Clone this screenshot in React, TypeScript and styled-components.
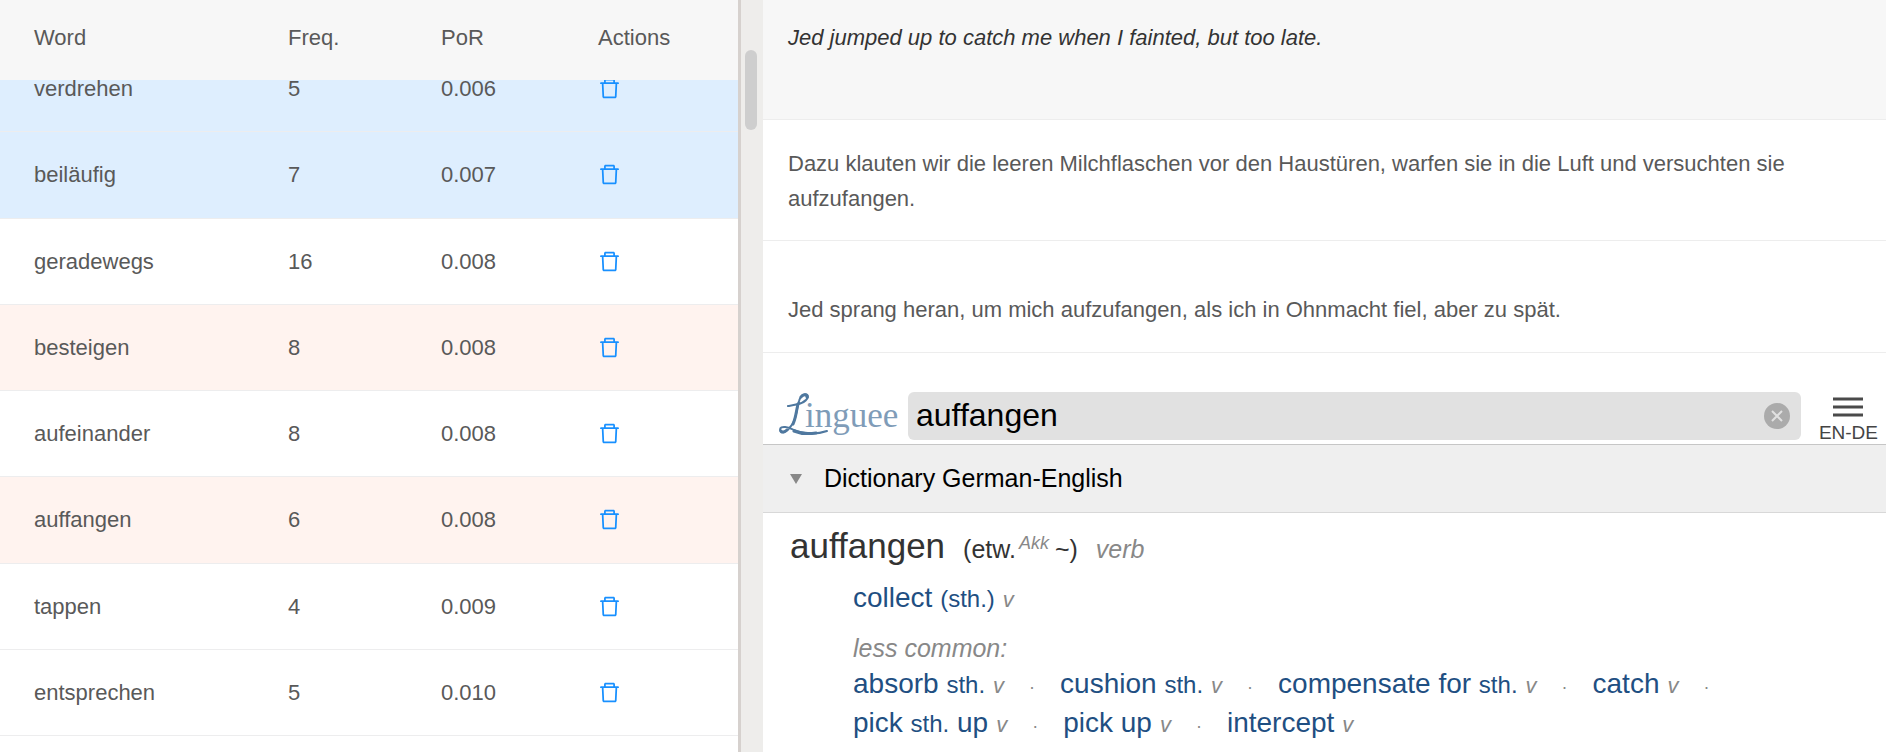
import { useLayoutEffect, useRef, useState } from "react";
import styled, { createGlobalStyle } from "styled-components";
import { AiOutlineDelete } from "react-icons/ai";

const Global = createGlobalStyle`
  * { box-sizing: border-box; }
  body {
    margin: 0;
    background: #fff;
    color: #595959;
    font: 22px/35px "Liberation Sans", Arial, sans-serif;
  }
`;

const Page = styled.div`
  display: grid;
  grid-template-columns: minmax(0, 738fr) 25px minmax(0, 1123fr);
  height: 100vh;
  overflow: hidden;
`;

const WordPane = styled.section`
  overflow: auto;
  scrollbar-width: none;
  padding-bottom: 40px;
`;

const WordTable = styled.table`
  width: 100%;
  height: 770px;
  table-layout: fixed;
  border-spacing: 0;
`;

const Col = styled.col<{ $w?: number }>`
  width: ${({ $w }) => ($w ? `${$w}px` : "auto")};
`;

const HeadCell = styled.th`
  position: sticky;
  top: 0;
  z-index: 1;
  height: 80px;
  padding: 20px 0 25px 34px;
  background: #f7f7f7;
  font-weight: 400;
  text-align: left;
`;

type Tone = "known" | "hard" | "plain";
const toneColor: Record<Tone, string> = { known: "#deeefe", hard: "#fff3ef", plain: "#fff" };

const Row = styled.tr<{ $tone: Tone }>`
  background: ${({ $tone }) => toneColor[$tone]};
`;

const Cell = styled.td`
  padding: 25px 0 25px 34px;
  border-bottom: 1px solid #ededee;
`;

const DeleteButton = styled.button`
  display: flex;
  padding: 0;
  margin-left: -1px;
  border: 0;
  background: none;
  color: #1890ff;
  cursor: pointer;
`;

const Gutter = styled.div`
  padding: 50px 5px 0 4px;
  border-left: 3px solid #d6d1ce;
  background: #eeedeb;
`;

const Thumb = styled.div`
  width: 12px;
  height: 80px;
  border-radius: 6px;
  background: #cecece;
`;

const ReadPane = styled.main`
  overflow: hidden;
`;

const Sentence = styled.p<{ $space?: "head" | "tall" }>`
  margin: 0;
  padding: ${({ $space }) =>
    $space === "head" ? "20px 25px 64px" : $space === "tall" ? "51px 25px 25px" : "26px 25px 24px"};
  border-bottom: 1px solid #ededed;
  background: ${({ $space }) => ($space === "head" ? "#f7f7f7" : "#fff")};
  color: ${({ $space }) => ($space === "head" ? "#333" : "inherit")};
  font-style: ${({ $space }) => ($space === "head" ? "italic" : "normal")};
`;

const SearchBar = styled.form`
  display: flex;
  align-items: flex-end;
  margin-top: 39px;
  padding: 0 8px 4px 16px;
  border-bottom: 1px solid #c6c6c6;
`;

const Logo = styled.a`
  width: 129px;
  height: 48px;
`;

const SearchField = styled.div`
  display: flex;
  flex: 1;
  align-items: center;
  height: 48px;
  padding: 0 11px 0 8px;
  border-radius: 6px;
  background: #e1e1e1;
`;

const SearchInput = styled.input`
  flex: 1;
  min-width: 0;
  padding: 0 0 2px;
  border: 0;
  outline: 0;
  background: none;
  color: #000;
  font: 32px/40px "Liberation Sans", Arial, sans-serif;
`;

const PlainButton = styled.button`
  display: flex;
  flex-direction: column;
  align-items: center;
  padding: 0;
  border: 0;
  background: none;
  color: #444;
  font: 19px/20px "Liberation Sans", Arial, sans-serif;
  cursor: pointer;
`;

const MenuButton = styled(PlainButton)`
  gap: 6px;
  margin: 0 0 -3px 18px;
`;

const DictHeader = styled.h2`
  display: flex;
  align-items: center;
  gap: 22px;
  height: 68px;
  margin: 0;
  padding: 0 27px;
  border-bottom: 1px solid #d8d8d8;
  background: #efefef;
  color: #000;
  font-size: 25px;
  font-weight: 400;
`;

const Entry = styled.article`
  padding: 13px 27px;
  color: #333;
`;

const Lemma = styled.h3`
  display: flex;
  align-items: baseline;
  height: 40px;
  margin: 0;
  font-size: 35px;
  font-weight: 400;
  line-height: 40px;
`;

const Note = styled.span`
  margin-left: 18px;
  font-size: 25px;
  line-height: 30px;
`;

const Case = styled.sup`
  margin: 0 6px 0 3px;
  color: #888;
  font-size: 18px;
  font-style: italic;
  line-height: 1;
`;

const Grey = styled.em`
  margin-left: 18px;
  color: #888;
  font-size: 25px;
  line-height: 30px;
`;

const Meanings = styled.div`
  padding-left: 63px;
`;

const Meaning = styled.p`
  margin: 0;
  font-size: 28px;
  line-height: 39px;
`;

const Lead = styled(Meaning)`
  margin-top: 12px;
`;

const Label = styled.p`
  margin: 15px 0 0;
  color: #888;
  font-size: 25px;
  font-style: italic;
  line-height: 32px;
`;

const Term = styled.a`
  color: #1f4f82;
  text-decoration: none;
`;

const Small = styled.span`
  font-size: 24px;
  line-height: 1;
`;

const Kind = styled.em`
  margin-left: 8px;
  color: #888;
  font-size: 22px;
  line-height: 1;
`;

const Dot = styled.span`
  margin: 0 25px;
  color: #888;
  font-size: 18px;
  line-height: 1;
`;

const words: [string, number, string, Tone][] = [
  ["verdrehen", 5, "0.006", "known"],
  ["beiläufig", 7, "0.007", "known"],
  ["geradewegs", 16, "0.008", "plain"],
  ["besteigen", 8, "0.008", "hard"],
  ["aufeinander", 8, "0.008", "plain"],
  ["auffangen", 6, "0.008", "hard"],
  ["tappen", 4, "0.009", "plain"],
  ["entsprechen", 5, "0.010", "plain"],
];

const alternatives: [string, string, string][] = [
  ["absorb", "sth.", ""],
  ["cushion", "sth.", ""],
  ["compensate for", "sth.", ""],
  ["catch", "", ""],
  ["pick", "sth.", "up"],
  ["pick up", "", ""],
  ["intercept", "", ""],
];

function LingueeLogo() {
  return (
    <svg width="129" height="48" viewBox="0 0 129 48" aria-hidden="true">
      <g fill="none" stroke="#4f789f" strokeLinecap="round" strokeLinejoin="round">
        <path
          strokeWidth="2"
          d="M9 14c6-1 18-2 20-9 0-5-7-3-9 4-3 9-2 19-8 25-3 5-10 9-11 4 0-5 9-3 14 0 8 4 22 5 33 1"
        />
        <path strokeWidth="3" d="M19 12c-2 8-2 14-5 20M22 5c2-3 6-3 6 0M15 39c7 3 15 3 22 2M2 39c1 2 4 1 6-1" />
      </g>
      <text x="26" y="35" fill="#7f9cb8" fontFamily="Liberation Serif, serif" fontSize="35">
        inguee
      </text>
    </svg>
  );
}

export default function App() {
  const pane = useRef<HTMLElement>(null);
  const [query, setQuery] = useState("auffangen");

  useLayoutEffect(() => {
    if (pane.current) pane.current.scrollTop = 34;
  }, []);

  return (
    <Page>
      <Global />
      <WordPane ref={pane}>
        <WordTable>
          <colgroup>
            <Col $w={254} />
            <Col $w={153} />
            <Col $w={157} />
            <Col />
          </colgroup>
          <thead>
            <tr>
              {["Word", "Freq.", "PoR", "Actions"].map((h) => (
                <HeadCell key={h} scope="col">{h}</HeadCell>
              ))}
            </tr>
          </thead>
          <tbody>
            {words.map(([word, freq, por, tone]) => (
              <Row key={word} $tone={tone}>
                <Cell>{word}</Cell>
                <Cell>{freq}</Cell>
                <Cell>{por}</Cell>
                <Cell>
                  <DeleteButton type="button" aria-label={`Delete ${word}`}>
                    <AiOutlineDelete size={25} />
                  </DeleteButton>
                </Cell>
              </Row>
            ))}
          </tbody>
        </WordTable>
      </WordPane>
      <Gutter>
        <Thumb />
      </Gutter>
      <ReadPane>
        <Sentence $space="head">Jed jumped up to catch me when I fainted, but too late.</Sentence>
        <Sentence>
          Dazu klauten wir die leeren Milchflaschen vor den Haustüren, warfen sie in die Luft und versuchten sie
          aufzufangen.
        </Sentence>
        <Sentence $space="tall">
          Jed sprang heran, um mich aufzufangen, als ich in Ohnmacht fiel, aber zu spät.
        </Sentence>
        <SearchBar onSubmit={(e) => e.preventDefault()}>
          <Logo href="#" aria-label="Linguee">
            <LingueeLogo />
          </Logo>
          <SearchField>
            <SearchInput aria-label="Search" value={query} onChange={(e) => setQuery(e.target.value)} />
            <PlainButton type="button" aria-label="Clear" onClick={() => setQuery("")}>
              <svg width="26" height="26" viewBox="0 0 26 26">
                <circle cx="13" cy="13" r="13" fill="#ababab" />
                <path d="M8 8l10 10M18 8L8 18" stroke="#e1e1e1" strokeWidth="2" />
              </svg>
            </PlainButton>
          </SearchField>
          <MenuButton type="button">
            <svg width="30" height="20" viewBox="0 0 30 20">
              <path d="M0 2h30M0 10h30M0 18h30" stroke="#4a4a4a" strokeWidth="3" />
            </svg>
            EN-DE
          </MenuButton>
        </SearchBar>
        <DictHeader>
          <svg width="12" height="10" viewBox="0 0 12 10">
            <path d="M0 0h12L6 10z" fill="#888" />
          </svg>
          Dictionary German-English
        </DictHeader>
        <Entry>
          <Lemma>
            auffangen
            <Note>
              (etw.<Case>Akk</Case>~)
            </Note>
            <Grey>verb</Grey>
          </Lemma>
          <Meanings>
            <Lead>
              <Term href="#">
                collect <Small>(sth.)</Small>
              </Term>
              <Kind>v</Kind>
            </Lead>
            <Label>less common:</Label>
            <Meaning>
              {alternatives.map(([before, object, after], i) => (
                <span key={before}>
                  <Term href="#">
                    {before}
                    {object && <> <Small>{object}</Small></>}
                    {after && ` ${after}`}
                  </Term>
                  <Kind>v</Kind>
                  {i < alternatives.length - 1 && <Dot>·</Dot>}
                  {i === 3 && <br />}
                </span>
              ))}
            </Meaning>
          </Meanings>
        </Entry>
      </ReadPane>
    </Page>
  );
}
